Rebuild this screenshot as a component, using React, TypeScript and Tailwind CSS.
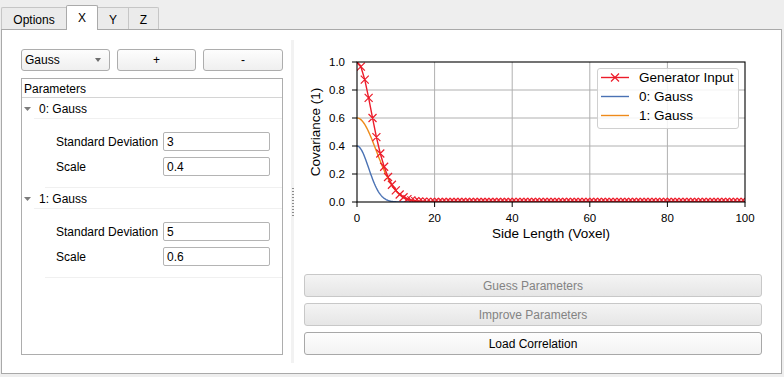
import React from 'react';

const PX = (v: number) => 53 + v * 3.88;
const PY = (v: number) => 162 - v * 140;
const g0 = (x: number) => 0.4 * Math.exp(-(x * x) / 18);
const g1 = (x: number) => 0.6 * Math.exp(-(x * x) / 50);
const gsum = (x: number) => g0(x) + g1(x);

const RED = '#ec1c2a';
const BLUE = '#4a72b4';
const ORANGE = '#ee8a1a';

function curve(f: (x: number) => number, step = 0.25) {
  let d = '';
  for (let x = 0, i = 0; x <= 100.0001; x += step, i++) {
    d += `${i ? 'L' : 'M'}${PX(x).toFixed(2)} ${PY(f(x)).toFixed(2)}`;
  }
  return d;
}

function cross(cx: number, cy: number, r = 4) {
  return `M${cx - r} ${cy - r}L${cx + r} ${cy + r}M${cx - r} ${cy + r}L${cx + r} ${cy - r}`;
}

function Chart() {
  const ints = Array.from({ length: 101 }, (_, i) => i);
  const markers = ints.map((i) => cross(PX(i), PY(gsum(i)))).join('');
  const xTicks = [0, 20, 40, 60, 80, 100];
  const yTicks = [0, 0.2, 0.4, 0.6, 0.8, 1.0];
  return (
    <svg width={458} height={234} className="block" fontFamily="'Liberation Sans', Arial, sans-serif">
      <defs>
        <clipPath id="plot">
          <rect x={53} y={22} width={388} height={140} />
        </clipPath>
      </defs>
      {/* grid */}
      {xTicks.slice(1, -1).map((t) => (
        <line key={`gx${t}`} x1={PX(t)} x2={PX(t)} y1={22} y2={162} stroke="#b0b0b0" strokeWidth={1} />
      ))}
      {yTicks.slice(1, -1).map((t) => (
        <line key={`gy${t}`} x1={53} x2={441} y1={PY(t)} y2={PY(t)} stroke="#b0b0b0" strokeWidth={1} />
      ))}
      <g clipPath="url(#plot)" fill="none" strokeWidth={1.4}>
        <path d={curve(g0)} stroke={BLUE} />
        <path d={curve(g1)} stroke={ORANGE} />
        <path d={curve(gsum, 1)} stroke={RED} />
        <path d={markers} stroke={RED} strokeWidth={1.2} />
      </g>
      {/* spines */}
      <rect x={53} y={22} width={388} height={140} fill="none" stroke="#000" strokeWidth={1.1} />
      {/* ticks */}
      {xTicks.map((t) => (
        <g key={`tx${t}`}>
          <line x1={PX(t)} x2={PX(t)} y1={162} y2={167} stroke="#000" strokeWidth={1} />
          <text x={PX(t)} y={182} fontSize={11.5} textAnchor="middle" fill="#000">{t}</text>
        </g>
      ))}
      {yTicks.map((t) => (
        <g key={`ty${t}`}>
          <line x1={48} x2={53} y1={PY(t)} y2={PY(t)} stroke="#000" strokeWidth={1} />
          <text x={41} y={PY(t) + 4} fontSize={11.5} textAnchor="end" fill="#000">{t.toFixed(1)}</text>
        </g>
      ))}
      <text x={247} y={198} fontSize={13.5} textAnchor="middle" fill="#000">Side Length (Voxel)</text>
      <text x={16} y={92} fontSize={13.5} textAnchor="middle" fill="#000" transform="rotate(-90 16 92)">Covariance (1)</text>
      {/* legend */}
      <rect x={293.5} y={28.5} width={141} height={60} rx={2.5} fill="#fff" fillOpacity={0.85} stroke="#d0d0d0" />
      <line x1={297} x2={325} y1={37.5} y2={37.5} stroke={RED} strokeWidth={1.4} />
      <path d={cross(311, 37.5)} stroke={RED} strokeWidth={1.2} fill="none" />
      <line x1={297} x2={325} y1={56.5} y2={56.5} stroke={BLUE} strokeWidth={1.4} />
      <line x1={297} x2={325} y1={75.5} y2={75.5} stroke={ORANGE} strokeWidth={1.4} />
      <text x={335} y={42} fontSize={13.5} fill="#000">Generator Input</text>
      <text x={335} y={61} fontSize={13.5} fill="#000">0: Gauss</text>
      <text x={335} y={80} fontSize={13.5} fill="#000">1: Gauss</text>
    </svg>
  );
}

function DownArrow({ className }: { className: string }) {
  return (
    <svg width={7} height={4} viewBox="0 0 7 4" className={className}>
      <path d="M0 0H7L3.5 4Z" fill="#7c7c7c" />
    </svg>
  );
}

function Field({ label, value }: { label: string; value: string }) {
  return (
    <div className="flex items-center h-[19px]">
      <span className="w-[107px]">{label}</span>
      <div className="w-[107px] h-[19px] border border-[#b4b4b4] rounded-[2px] pl-[3px] pt-px flex items-center bg-white">
        {value}
      </div>
    </div>
  );
}

function Group({ name, sd, scale }: { name: string; sd: string; scale: string }) {
  return (
    <div>
      <div className="h-[20px] flex items-center pl-[2px] pt-[2px]">
        <DownArrow className="mr-[8px]" />
        <span>{name}</span>
      </div>
      <div className="ml-[12px] h-px bg-[#f0f0f0]" />
      <div className="h-[68px] pt-[13px] pl-[34px] flex flex-col gap-[6px]">
        <Field label="Standard Deviation" value={sd} />
        <Field label="Scale" value={scale} />
      </div>
      <div className="ml-[23px] h-px bg-[#f0f0f0]" />
    </div>
  );
}

const btn =
  'h-[22px] flex items-center rounded-[3px] border border-[#adadad] bg-linear-to-b from-[#fdfdfd] to-[#efefef]';

export default function App() {
  return (
    <div className="w-[784px] h-[377px] bg-[#eeeeee] font-['Liberation_Sans',Arial,sans-serif] text-[12px] text-black overflow-hidden">
      {/* tab bar */}
      <div className="flex items-end h-[29px] pl-[1px]">
        <div className="w-[65px] h-[22px] pt-[2px] flex items-center justify-center border-l border-t border-[#c6c6c6] bg-[#ebebeb] rounded-tl-[2px]">
          Options
        </div>
        <div className="relative z-10 w-[32px] h-[25px] -mb-px flex items-center justify-center border-l border-r border-t border-[#aaaaaa] bg-white rounded-t-[2px]">
          X
        </div>
        <div className="w-[31px] h-[22px] pt-[2px] flex items-center justify-center border-r border-t border-[#c6c6c6] bg-[#ebebeb]">
          Y
        </div>
        <div className="w-[30px] h-[22px] pt-[2px] flex items-center justify-center border-r border-t border-[#c6c6c6] bg-[#ebebeb] rounded-tr-[2px]">
          Z
        </div>
      </div>

      {/* panel */}
      <div className="ml-px w-[781px] h-[345px] border border-[#a9a9a9] bg-white flex items-start">
        {/* left column */}
        <div className="ml-[19px] mt-[19px] w-[262px] flex flex-col">
          <div className="flex gap-[7px]">
            <div className={`${btn} w-[89px] justify-between pl-[3px] pr-[8px]`}>
              <span>Gauss</span>
              <svg width={6} height={4} viewBox="0 0 6 4">
                <path d="M0 0H6L3 4Z" fill="#6e6e6e" />
              </svg>
            </div>
            <div className={`${btn} justify-center w-[79px]`}>+</div>
            <div className={`${btn} justify-center w-[80px]`}>-</div>
          </div>
          <div className="mt-[7px] h-[277px] border border-[#adadad] bg-white">
            <div className="h-[19px] border-b border-[#d4d4d4] pl-[2px] pt-px flex items-center">Parameters</div>
            <Group name="0: Gauss" sd="3" scale="0.4" />
            <Group name="1: Gauss" sd="5" scale="0.6" />
          </div>
        </div>

        {/* splitter */}
        <div className="ml-[8px] mt-[10px] w-[3px] h-[323px] bg-[#f2f2f2] flex flex-col items-center justify-center gap-[2px]">
          {Array.from({ length: 10 }).map((_, i) => (
            <div key={i} className="w-[2px] h-px bg-[#8c8c8c]" />
          ))}
        </div>

        {/* right column */}
        <div className="ml-[10px] mt-[10px] w-[458px] flex flex-col">
          <Chart />
          <div className="flex flex-col gap-[6px]">
            <div className="h-[23px] flex items-center justify-center rounded-[3px] border border-[#c8c8c8] bg-linear-to-b from-[#f4f4f4] to-[#e6e6e6] text-[#838383]">
              Guess Parameters
            </div>
            <div className="h-[23px] flex items-center justify-center rounded-[3px] border border-[#c8c8c8] bg-linear-to-b from-[#f4f4f4] to-[#e6e6e6] text-[#838383]">
              Improve Parameters
            </div>
            <div className="h-[23px] flex items-center justify-center rounded-[3px] border border-[#a8a8a8] bg-linear-to-b from-[#fdfdfd] to-[#f3f3f3]">
              Load Correlation
            </div>
          </div>
        </div>
      </div>
    </div>
  );
}
